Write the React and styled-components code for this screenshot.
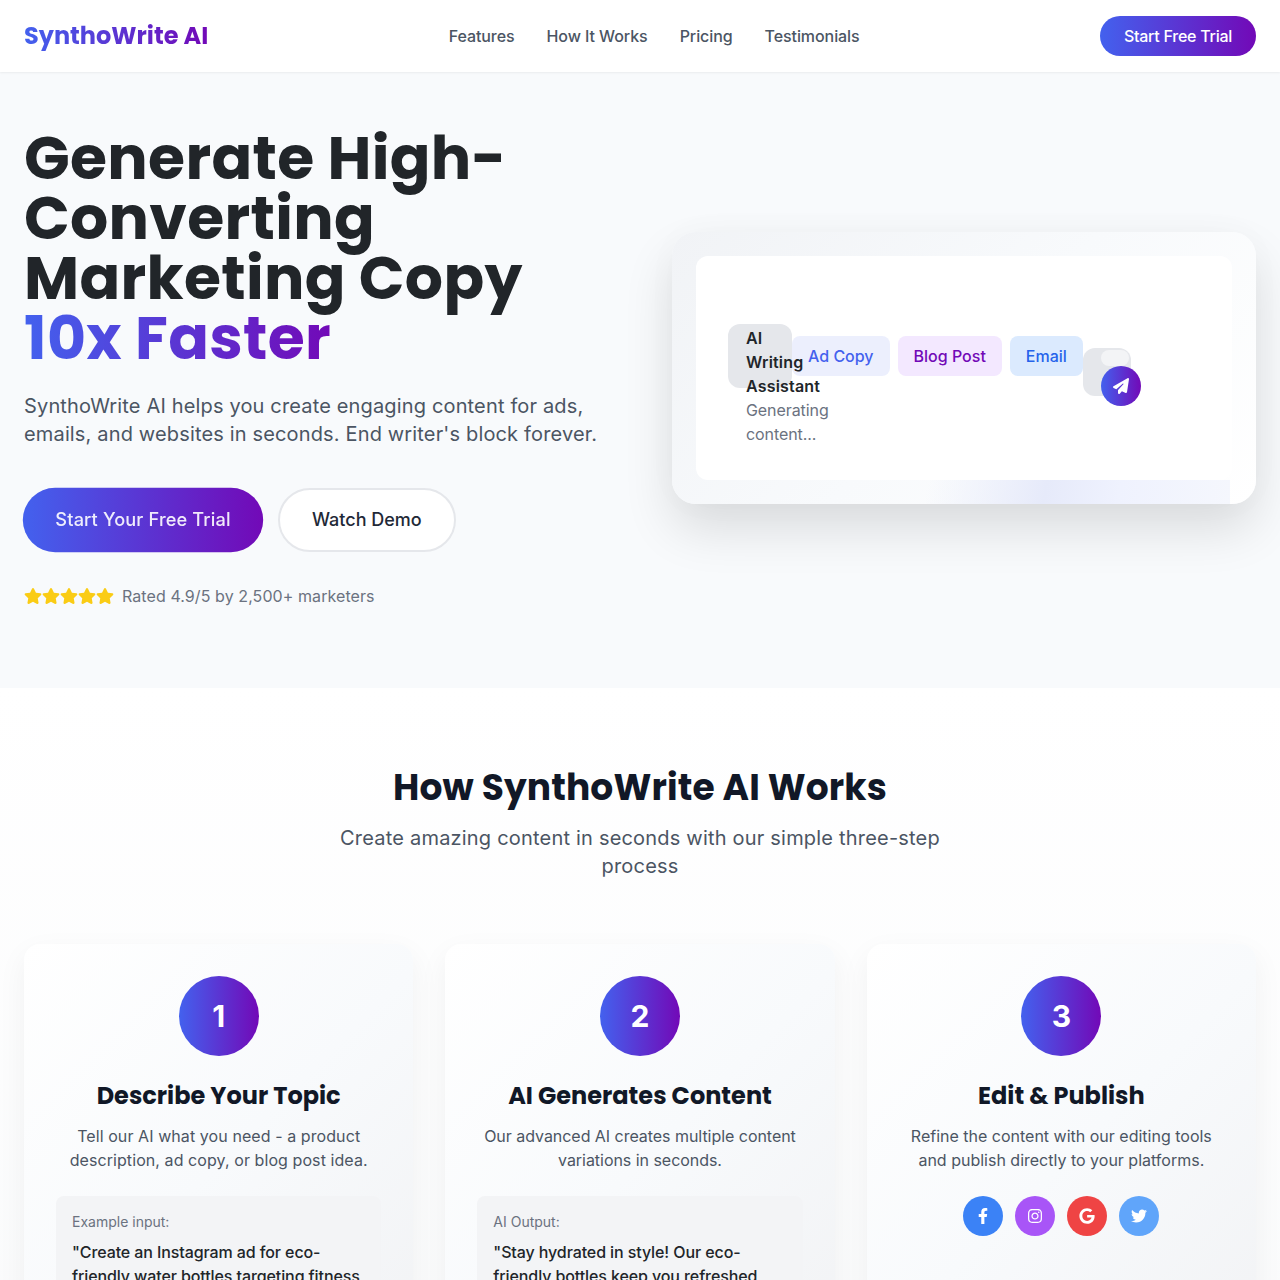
import React from "react";
import styled, { createGlobalStyle, css } from "styled-components";
import { FaStar, FaPaperPlane, FaFacebookF, FaInstagram, FaGoogle, FaTwitter } from "react-icons/fa";

const brand = "linear-gradient(to right, #4361ee, #7209b7)";
const display = `Poppins, Inter, sans-serif`;

const Global = createGlobalStyle`
  *, *::before, *::after { box-sizing: border-box; }
  body {
    margin: 0;
    height: 1280px;
    overflow: hidden;
    background: #f8fafc;
    color: #212529;
    font-family: Inter, sans-serif;
    font-size: 16px;
    line-height: 24px;
  }
  h1, h2, h3, p { margin: 0; }
`;

const gradientText = css`
  background: ${brand};
  -webkit-background-clip: text;
  background-clip: text;
  color: transparent;
`;

const Page = styled.div`
  height: 1280px;
  overflow: hidden;
`;
const Header = styled.header`
  position: relative;
  z-index: 2;
  display: flex;
  align-items: center;
  justify-content: space-between;
  height: 72px;
  padding: 0 24px;
  background: #fff;
  box-shadow: 0 1px 2px rgba(0, 0, 0, 0.06);
`;
const Logo = styled.div`
  ${gradientText}
  font: 700 24px/32px ${display};
  white-space: nowrap;
`;
const Nav = styled.nav`
  display: flex;
  gap: 32px;
`;
const NavLink = styled.a`
  color: #4b5563;
  font-weight: 500;
  letter-spacing: -0.08px;
`;
const TrialButton = styled.button`
  width: 156px;
  height: 40px;
  padding: 0;
  border: 0;
  border-radius: 20px;
  background: ${brand};
  color: #fff;
  font: 500 16px/24px Inter, sans-serif;
  letter-spacing: -0.25px;
`;

const Hero = styled.section`
  display: grid;
  grid-template-columns: 584px 584px;
  gap: 64px;
  align-items: center;
  height: 616px;
  padding: 56px 24px 80px;
  background: #f8fafc;
`;
const HeroTitle = styled.h1`
  font: 700 60px/60px ${display};
  letter-spacing: 0.33px;
  color: #212529;
  white-space: nowrap;
`;
const Accent = styled.span`
  ${gradientText}
  display: inline-block;
`;
const Lead = styled.p`
  margin-top: 24px;
  color: #4b5563;
  font-size: 20px;
  line-height: 28px;
  letter-spacing: 0.155px;
`;
const Actions = styled.div`
  display: flex;
  gap: 16px;
  margin-top: 40px;
`;
const PillButton = styled.button`
  height: 64px;
  padding: 0 32px;
  border: 2px solid #e5e7eb;
  border-radius: 32px;
  background: #fff;
  color: #1f2937;
  font: 500 18px/28px Inter, sans-serif;
  ${(p) =>
    p.$primary &&
    css`
      width: 238px;
      padding: 0;
      border: 0;
      background: ${brand};
      color: rgba(255, 255, 255, 0.9);
      letter-spacing: 0.14px;
      transform: scale(1.01);
    `}
`;
const Rating = styled.div`
  display: flex;
  align-items: center;
  margin-top: 32px;
  color: #6b7280;
  letter-spacing: 0.08px;
`;
const Stars = styled.div`
  display: flex;
  margin-right: 8px;
  color: #facc15;
`;

const Preview = styled.div`
  position: relative;
  height: 272px;
  padding: 24px;
  border-radius: 24px;
  background: linear-gradient(135deg, #f1f3f6, #f8fafc 50%, #fff);
  box-shadow: 0 25px 50px rgba(0, 0, 0, 0.12), 0 0 40px rgba(0, 0, 0, 0.02);
`;
const PreviewGlow = styled.div`
  position: absolute;
  left: 240px;
  bottom: 0;
  width: 318px;
  height: 24px;
  background: linear-gradient(100deg, #e6eafa00 5%, #e6eafa 42%, #eff2fe 65%, #f5f7fd);
`;
const Canvas = styled.div`
  position: relative;
  display: flex;
  align-items: flex-start;
  height: 224px;
  padding: 68px 32px 0;
  border-radius: 12px;
  background: #fff;
`;
const Avatar = styled.div`
  position: relative;
  width: 64px;
  height: 64px;
  border-radius: 12px;
  background: #e5e7eb;
`;
const AvatarText = styled.div`
  position: absolute;
  left: 18px;
  top: 2px;
  width: 46px;
  color: #6b7280;
  letter-spacing: -0.08px;
`;
const Strong = styled.div`
  color: #212529;
  font-weight: 600;
  letter-spacing: 0.18px;
`;
const Chips = styled.div`
  display: flex;
  gap: 8px;
  margin-top: 12px;
`;
const Chip = styled.div`
  padding: 8px 16px;
  border-radius: 8px;
  background: ${(p) => p.$bg};
  color: ${(p) => p.$fg};
  font-weight: 500;
  white-space: nowrap;
`;
const Composer = styled.div`
  position: relative;
  width: 48px;
  height: 48px;
  margin-top: 24px;
  border-radius: 12px;
  background: #e5e7eb;
`;
const Field = styled.div`
  position: absolute;
  left: 18px;
  top: 2px;
  width: 28px;
  height: 16px;
  border-radius: 8px;
  background: #f3f4f6;
`;
const Send = styled.div`
  position: absolute;
  left: 18px;
  top: 18px;
  display: flex;
  align-items: center;
  justify-content: center;
  width: 40px;
  height: 40px;
  border-radius: 50%;
  background: ${brand};
  color: #fff;
`;
const PlaneIcon = () => (
  <svg width="16" height="16" viewBox="0 0 512 512" fill="currentColor">
    <path d="M498.1 5.6c10.1 7 15.4 19.1 13.5 31.2l-64 416c-1.5 9.7-7.4 18.2-16 23s-18.900 5.400-28 1.600L284 427.700l-68.500 74.100c-8.900 9.700-22.900 12.900-35.200 8.100S160 493.200 160 480l0-83.600c0-4 1.500-7.800 4.200-10.800L331.800 202.800c5.800-6.300 5.600-16-.4-22s-15.700-6.400-22-.7L106 360.800 17.700 316.600C7.100 311.300 .3 300.700 0 288.900s5.900-22.800 16.100-28.700l448-256c10.700-6.100 23.900-5.500 34 1.400z" />
  </svg>
);

const Works = styled.section`
  padding: 80px 24px;
  background: linear-gradient(#fff, #f9fafb);
  text-align: center;
`;
const WorksTitle = styled.h2`
  color: #111827;
  font: 700 36px/40px ${display};
  letter-spacing: 0.13px;
`;
const WorksLead = styled.p`
  width: 640px;
  margin: 16px auto 64px;
  color: #4b5563;
  font-size: 20px;
  line-height: 28px;
  letter-spacing: 0.2px;
`;
const Steps = styled.div`
  display: grid;
  grid-template-columns: repeat(3, 1fr);
  gap: 32px;
`;
const Step = styled.article`
  height: 440px;
  padding: 32px;
  border-radius: 16px;
  background: linear-gradient(135deg, #fff, #f8fafc 50%, #f1f2f4);
  box-shadow: 0 10px 30px rgba(0, 0, 0, 0.05);
`;
const Badge = styled.div`
  display: flex;
  align-items: center;
  justify-content: center;
  width: 80px;
  height: 80px;
  margin: 0 auto 24px;
  border-radius: 50%;
  background: ${brand};
  color: #fff;
  font-size: 30px;
  font-weight: 700;
`;
const StepTitle = styled.h3`
  color: #111827;
  font: 700 24px/32px ${display};
`;
const StepText = styled.p`
  margin-top: 12px;
  color: #4b5563;
  letter-spacing: ${(p) => p.$tracking || 0}px;
`;
const Sample = styled.div`
  margin-top: 24px;
  padding: 16px;
  border-radius: 8px;
  background: #f3f4f6;
  text-align: left;
`;
const SampleLabel = styled.div`
  margin-bottom: 8px;
  color: #6b7280;
  font-size: 14px;
  line-height: 20px;
`;
const SampleText = styled.div`
  font-weight: 500;
  letter-spacing: -0.1px;
`;
const Socials = styled.div`
  display: flex;
  justify-content: center;
  gap: 12px;
  margin-top: 24px;
`;
const Social = styled.div`
  display: flex;
  align-items: center;
  justify-content: center;
  width: 40px;
  height: 40px;
  border-radius: 50%;
  background: ${(p) => p.$bg};
  color: #fff;
`;

export default function App() {
  return (
    <Page>
      <Global />
      <Header>
        <Logo>SynthoWrite AI</Logo>
        <Nav>
          <NavLink>Features</NavLink>
          <NavLink>How It Works</NavLink>
          <NavLink>Pricing</NavLink>
          <NavLink>Testimonials</NavLink>
        </Nav>
        <TrialButton>Start Free Trial</TrialButton>
      </Header>
      <Hero>
        <div>
          <HeroTitle>
            Generate High-<br />Converting<br />Marketing Copy<br />
            <Accent>10x Faster</Accent>
          </HeroTitle>
          <Lead>
            SynthoWrite AI helps you create engaging content for ads,<br />
            emails, and websites in seconds. End writer's block forever.
          </Lead>
          <Actions>
            <PillButton $primary>Start Your Free Trial</PillButton>
            <PillButton>Watch Demo</PillButton>
          </Actions>
          <Rating>
            <Stars>{[0, 1, 2, 3, 4].map((i) => <FaStar key={i} size={18} />)}</Stars>
            Rated 4.9/5 by 2,500+ marketers
          </Rating>
        </div>
        <Preview>
          <PreviewGlow />
          <Canvas>
            <Avatar>
              <AvatarText>
                <Strong>AI Writing Assistant</Strong>
                Generating content...
              </AvatarText>
            </Avatar>
            <Chips>
              <Chip $bg="rgba(67, 97, 238, 0.1)" $fg="#4361ee">Ad Copy</Chip>
              <Chip $bg="#f3e8ff" $fg="#7209b7">Blog Post</Chip>
              <Chip $bg="#dbeafe" $fg="#2563eb">Email</Chip>
            </Chips>
            <Composer>
              <Field />
              <Send><PlaneIcon /></Send>
            </Composer>
          </Canvas>
        </Preview>
      </Hero>
      <Works>
        <WorksTitle>How SynthoWrite AI Works</WorksTitle>
        <WorksLead>Create amazing content in seconds with our simple three-step process</WorksLead>
        <Steps>
          <Step>
            <Badge>1</Badge>
            <StepTitle>Describe Your Topic</StepTitle>
            <StepText $tracking={0.08}>Tell our AI what you need - a product description, ad copy, or blog post idea.</StepText>
            <Sample>
              <SampleLabel>Example input:</SampleLabel>
              <SampleText>"Create an Instagram ad for eco-friendly water bottles targeting fitness</SampleText>
            </Sample>
          </Step>
          <Step>
            <Badge>2</Badge>
            <StepTitle>AI Generates Content</StepTitle>
            <StepText $tracking={-0.04}>Our advanced AI creates multiple content variations in seconds.</StepText>
            <Sample>
              <SampleLabel>AI Output:</SampleLabel>
              <SampleText>"Stay hydrated in style! Our eco-friendly bottles keep you refreshed</SampleText>
            </Sample>
          </Step>
          <Step>
            <Badge>3</Badge>
            <StepTitle>Edit & Publish</StepTitle>
            <StepText>Refine the content with our editing tools and publish directly to your platforms.</StepText>
            <Socials>
              <Social $bg="#3b82f6"><FaFacebookF size={16} /></Social>
              <Social $bg="#a855f7"><FaInstagram size={16} /></Social>
              <Social $bg="#ef4444"><FaGoogle size={16} /></Social>
              <Social $bg="#60a5fa"><FaTwitter size={16} /></Social>
            </Socials>
          </Step>
        </Steps>
      </Works>
    </Page>
  );
}
